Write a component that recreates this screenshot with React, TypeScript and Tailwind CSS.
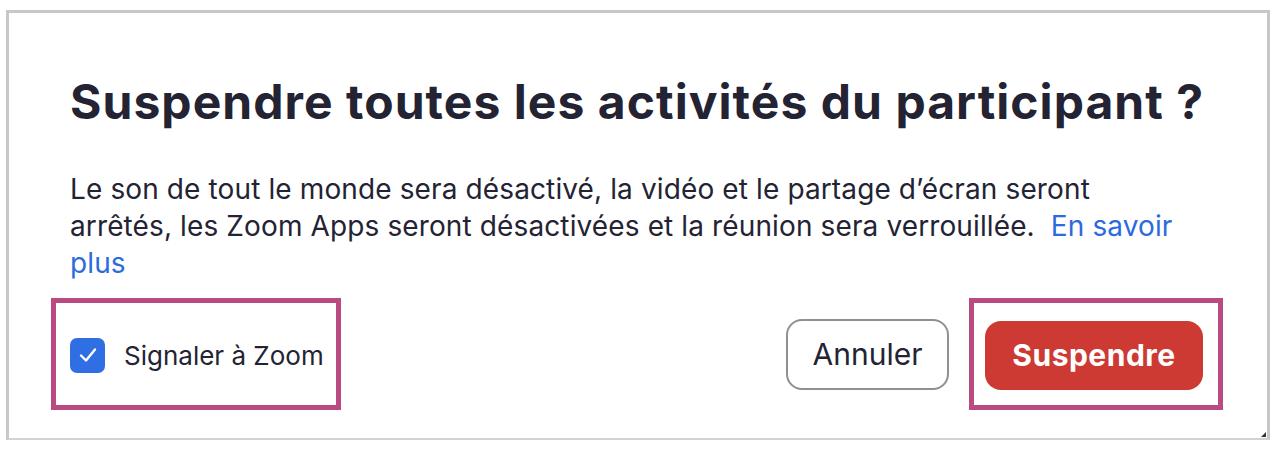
import React from "react";

export default function App() {
  return (
    <div className="w-[1280px] h-[452px] bg-white overflow-hidden" style={{ fontFamily: "Inter, 'Noto Sans', sans-serif" }}>
      <div className="relative ml-[6px] mt-[10px] w-[1264px] h-[430px] border-[3px] border-b-2 border-[#c8c8c8] border-b-[#d2d2d2] bg-white">
        <div className="pl-[61px] pr-[40px]">
          <h1 className="mt-[61px] text-[48px] leading-[56px] font-bold text-[#232333] whitespace-nowrap tracking-[1.05px]">
            Suspendre toutes les activités du participant ?
          </h1>
          <p className="mt-[41px] w-[1118px] text-[28px] leading-[37px] text-[#232333] tracking-[0.12px]">
            Le son de tout le monde sera désactivé, la vidéo et le partage d’écran seront arrêtés, les Zoom Apps seront désactivées et la réunion sera verrouillée.{" "}
            <span className="text-[#2b6bdd] ml-[8px]">En savoir plus</span>
          </p>
        </div>
        <div className="mt-[16px] pl-[42px] pr-[44px] flex items-center justify-between">
          <div className="w-[290px] h-[112px] border-[5px] border-[#bb4a82] flex items-center pl-[14px] pt-[2px]">
            <div className="w-[35px] h-[35px] rounded-[7px] bg-[#2f6fe3] flex items-center justify-center">
              <svg width="22" height="22" viewBox="0 0 22 22" fill="none">
                <path d="M4 11.5 L9 16.5 L18 5.5" stroke="white" strokeWidth="2.4" strokeLinecap="round" strokeLinejoin="round" />
              </svg>
            </div>
            <span className="ml-[19px] text-[26px] text-[#232333]">Signaler à Zoom</span>
          </div>
          <div className="flex items-center gap-[20px]">
            <button className="w-[163px] h-[71px] rounded-[16px] border-2 border-[#909094] bg-white text-[30px] text-[#232333]">
              Annuler
            </button>
            <div className="w-[254px] h-[112px] border-[5px] border-[#bb4a82] flex items-center pl-[11px] pt-[3px]">
              <button className="w-[218px] h-[69px] rounded-[16px] bg-[#cc3a33] text-white text-[30px] font-bold tracking-[0.5px]">
                Suspendre
              </button>
            </div>
          </div>
        </div>
        <div className="absolute right-[1px] bottom-[1px] w-0 h-0 border-l-[5px] border-l-transparent border-b-[5px] border-b-[#333]" />
      </div>
    </div>
  );
}
